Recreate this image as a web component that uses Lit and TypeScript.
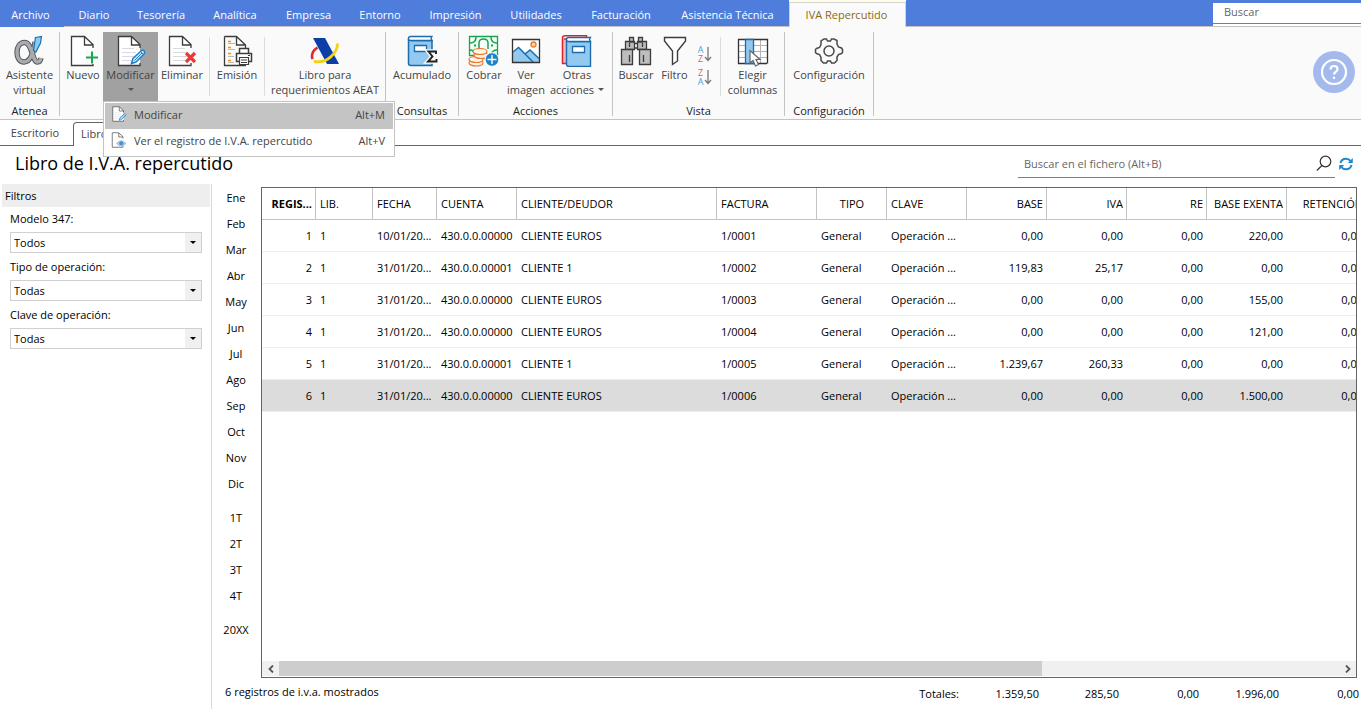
import { LitElement, html, svg, css, nothing, type TemplateResult } from "lit";
import { customElement, property, state } from "lit/decorators.js";
import { classMap } from "lit/directives/class-map.js";

const page = (lines: boolean) => svg`
  <path d="M2.500 1.500H15.500L24 10V30.500H2.500Z" fill="#fff" stroke="none"/>
  ${lines ? svg`<path d="M6 13.500H18M6 17.500H20M6 21.500H20M6 25.500H18" stroke="#d8dbe0"/>` : nothing}
  <path d="M24 13V9.500L15.500 1.500H2.500V30.500H24V28M15.500 2V10H24" fill="none" stroke="#3c3c3c" stroke-width="1.300"/>`;

const pencil = svg`
  <path d="M16.500 28.500L18 23.500L26.500 15.500Q28.500 14.500 29.500 16.500Q30 18 29 19L21 27Z" fill="#d5ebfa" stroke="#1e82c8" stroke-width="1.500"/>
  <path d="M19.500 25.500L27 18M25.500 16.500L28.500 19.500" stroke="#1e82c8" fill="none"/>`;

const ALPHA = "M21 7C19.500 17 17 27 10 27C5.500 27 3 22.500 3 17.500C3 11.500 6 7.500 10.500 7.500C18.500 7.500 18 27 23.500 27C25.500 27 26.500 25.500 27 23";

const icons: Record<string, TemplateResult> = {
  alpha: svg`
    <path d=${ALPHA} fill="none" stroke="#55585c" stroke-width="5.400"/>
    <path d=${ALPHA} fill="none" stroke="#a9abad" stroke-width="3.400"/>
    <path d="M21.500 2.500L27.500 1.500L26.500 8L22 17L19.500 15.500Z" fill="#8dcaf2" stroke="#1a70b4" stroke-width="1.200"/>`,
  add: svg`<g transform="translate(2 0)">${page(false)}<path d="M16 16H30V29H16Z" fill="#fafafa"/><path d="M23 16.500V28.500M17 22.500H29" stroke="#14a94b" stroke-width="2"/></g>`,
  edit: svg`<g transform="translate(1 0)">${page(true)}</g>${pencil}`,
  remove: svg`<g transform="translate(1 0)">${page(true)}</g><path d="M20 18L29 27M29 18L20 27" stroke="#ee3a36" stroke-width="3.200"/>`,
  emit: svg`
    <path d="M3.500 1.500H15.500L24.500 10V13M3.500 1.500V30.500H25M15.500 2V10H24" fill="none" stroke="#3c3c3c" stroke-width="1.300"/>
    <path d="M7 6.500H10M7 12.500H10M7 18.500H10M7 25.500H10" stroke="#f39200" stroke-width="1.300"/>
    <path d="M7 8.500H14M7 14.500H14M7 21.500H13M7 27.500H13" stroke="#b9b9b9"/>
    <path d="M18.500 18V13.500H27.500V18M18.500 26.500H15.500V18.500H30.500V26.500H27.500" fill="#fff" stroke="#3c3c3c" stroke-width="1.500"/>
    <path d="M18.500 22.500H27.500V29.500H18.500ZM20 25H26M20 27.500H26M27 20.500H29" fill="#fff" stroke="#3c3c3c" stroke-width="1.200"/>`,
  aeat: svg`
    <path d="M4 3H16L30 29H18Z" fill="#0c3ea8"/>
    <path d="M8.500 12.500C4 15.500 2 19.500 3.500 24" fill="none" stroke="#e3262e" stroke-width="2.600"/>
    <path d="M28.500 8.500C28.500 17 19 29 5 26.500" fill="none" stroke="#f7d010" stroke-width="2.800"/>`,
  sum: svg`
    <path d="M2.500 3V28.500Q2.500 30.500 5 30.500H26V5.500H5" fill="#93c9ee" stroke="#1a6cae" stroke-width="1.500"/>
    <path d="M26 1.500H4.500Q2.500 1.500 2.500 3.500T4.500 5.500H26L25 3.500Z" fill="#fff" stroke="#1a6cae" stroke-width="1.300"/>
    <path d="M8.500 10.500H20.500V16.500H8.500Z" fill="#fff" stroke="#1a6cae" stroke-width="1.300"/>
    <path d="M30 19V16.500H22.500L26.500 21.500L22 26.500H30.500V24" fill="none" stroke="#fafafa" stroke-width="4.500"/>
    <path d="M30 19V16.500H22.500L26.500 21.500L22 26.500H30.500V24" fill="none" stroke="#222" stroke-width="1.900"/>`,
  cash: svg`
    <path d="M1.500 1.500H29.500V20.500H1.500Z" fill="#f4fff7" stroke="#18a350" stroke-width="1.300"/>
    <path d="M2 8Q8 8 8 2M23 2Q23 8 29 8M2 15Q6 15 8 20M29 15Q24 15 23 20M11 14V8Q11 4 15.500 4T20 8V14" fill="none" stroke="#18a350" stroke-width="1.500"/>
    <path d="M6 10.500H8M23 10.500H25" stroke="#18a350" stroke-width="2"/>
    <g fill="#fff2e6" stroke="#e9762b" stroke-width="1.200"><ellipse cx="8" cy="28" rx="7" ry="3"/><ellipse cx="8" cy="24.500" rx="7" ry="3"/><ellipse cx="13" cy="20.500" rx="7" ry="3"/><ellipse cx="12" cy="16.500" rx="7" ry="3"/></g>
    <circle cx="24" cy="24.500" r="6.800" fill="#1e82c8" stroke="#fafafa"/>
    <path d="M24 20V29M19.500 24.500H28.500" stroke="#fff" stroke-width="1.400"/>`,
  image: svg`
    <path d="M2.500 4.500H29.500V27.500H2.500Z" fill="#fff"/>
    <path d="M3 17L9 12L15 18L20 15L29 23V27H3Z" fill="#93c9ee"/>
    <path d="M3 17L8.500 12.500L23 27M15 19L20 15L29 23.500" fill="none" stroke="#1a6cae" stroke-width="1.400"/>
    <path d="M2.500 4.500H29.500V27.500H2.500Z" fill="none" stroke="#333" stroke-width="1.300"/>
    <circle cx="23.500" cy="9.500" r="2.500" fill="#ffd79a" stroke="#ea7b2d" stroke-width="1.300"/>`,
  books: svg`
    <path d="M1.500 3V28.500H23V4H3Z" fill="#f6b8bb"/>
    <path d="M25.500 4V.800H4Q1.500 .800 1.500 3V28.500H7M3 4H10" fill="none" stroke="#d8242c" stroke-width="1.500"/>
    <path d="M5.500 5V29.500Q5.500 31.500 8 31.500H29.500V6.500H8" fill="#93c9ee" stroke="#1a6cae" stroke-width="1.400"/>
    <path d="M29.500 2.500H7.500Q5.500 2.500 5.500 4.500T7.500 6.500H29.500L28.500 4.500Z" fill="#fff" stroke="#1a6cae" stroke-width="1.300"/>
    <path d="M11.500 11.500H23.500V17.500H11.500Z" fill="#fff" stroke="#1a6cae" stroke-width="1.300"/>`,
  binoculars: svg`
    <g fill="#bdbdbd" stroke="#3c3c3c" stroke-width="1.300">
      <path d="M14 8.500H18V13H14Z" fill="#fff"/>
      <path d="M9.500 2.500H13.500V7H9.500ZM18.500 2.500H22.500V7H18.500ZM5.500 6.500H14.500V14.500H5.500ZM17.500 6.500H26.500V14.500H17.500Z"/>
      <path d="M1.500 14.500H12.500V29.500H1.500ZM19.500 14.500H30.500V29.500H19.500Z"/>
      <path d="M9.500 20V27M23.500 20V27M9.500 8V12M22.500 8V12"/>
    </g>`,
  funnel: svg`<path d="M5.500 2.500H26.500V6L18.500 16V26L13.500 29.500V16L5.500 6Z" fill="#fff" stroke="#3c3c3c" stroke-width="1.400"/>`,
  columns: svg`
    <path d="M1.500 4.500H30.500V28.500H1.500Z" fill="#fff"/>
    <path d="M2 10.500H30M2 16.500H30M2 22.500H30M23.500 5V28" stroke="#b4b4b4"/>
    <path d="M30 28.500H1.500V4.500H30.500V28.500" fill="none" stroke="#333" stroke-width="1.300"/>
    <path d="M8.500 4.500H16.500V28.500H8.500Z" fill="#93c9ee" stroke="#1a6cae" stroke-width="1.300"/>
    <path d="M13 15.500V28L16 25.500L18.500 31L21.500 29.500L19 24.500H23Z" fill="#fff" stroke="#666" stroke-width="1.200"/>`,
  gear: svg`
    <path d="M11 4H13.500L14.500 6H17.500L18.500 4H21L24 5.500V9L25.500 12L28.500 13L29.500 14.500V17.500L28.500 18.500L25.500 19.500L24 22V25.500L21.500 28H18.500L17.500 26H14.500L13.500 28H10.500L8 25.500V22.500L6.500 19.500L3.500 18.500L2.500 17.500V14.500L3.500 13.500L6.500 12.500L8 9.500V6Z" fill="#fafafa" stroke="#4a4a4a" stroke-width="1.500"/>
    <circle cx="16" cy="16" r="5" fill="none" stroke="#4a4a4a" stroke-width="1.500"/>`,
  view: svg`${page(false)}
    <path d="M11 23Q20 12 30 23Q20 33 11 23Z" fill="#b5cde0" stroke="#7c9cb8"/><circle cx="20.500" cy="22.500" r="4" fill="#3f93d0"/>`,
};

const icon = (name: string, small = false) =>
  html`<svg class=${small ? "icon-sm" : "icon"} viewBox="0 0 32 32" aria-hidden="true">${icons[name]}</svg>`;

const sharedText = css`
  :host { font-family: "Open Sans", "Noto Sans", sans-serif; }
  * { box-sizing: border-box; }
  button, input, select { font: inherit; color: inherit; border: 0; padding: 0; margin: 0; background: none; border-radius: 0; }
`;

interface Tool { id: string; icon: string; lines: string[]; arrow?: boolean }

@customElement("ribbon-tool")
class RibbonTool extends LitElement {
  @property({ attribute: false }) tool!: Tool;
  @property({ type: Boolean }) open = false;

  static styles = [sharedText, css`
    :host { display: block; }
    button { display: flex; flex-direction: column; align-items: center; width: 100%; height: 69px; padding-top: 3px; white-space: nowrap; font-size: 11px; line-height: 15px; color: #444; }
    button.pressed { background: #a1a1a1; }
    .icon { width: 32px; height: 32px; flex: none; }
    .line { display: flex; align-items: center; justify-content: center; height: 15px; gap: 4px; }
    .caret { width: 0; border: 3px solid transparent; border-top-color: #555; border-bottom-width: 0; }
  `];

  render() {
    const { tool } = this;
    return html`<button class=${classMap({ pressed: this.open })} aria-label=${tool.lines.join(" ")}>
      ${icon(tool.icon)}
      ${tool.lines.map((text, i) => html`<span class="line">${text}${tool.arrow && i === tool.lines.length - 1 ? html`<span class="caret"></span>` : nothing}</span>`)}
    </button>`;
  }
}

const MENU = [
  { icon: "edit", text: "Modificar", key: "Alt+M" },
  { icon: "view", text: "Ver el registro de I.V.A. repercutido", key: "Alt+V" },
];

const MODULES = ["Archivo", "Diario", "Tesorería", "Analítica", "Empresa", "Entorno", "Impresión", "Utilidades", "Facturación", "Asistencia Técnica", "IVA Repercutido"];

@customElement("app-ribbon")
class AppRibbon extends LitElement {
  @state() private highlighted = 0;

  static styles = [sharedText, css`
    :host { display: block; font-size: 11px; }
    .modules { display: grid; grid-template-columns: 64px 60px 74px 74px 73px 70px 81px 80px 90px 123px 117px 1fr 148px; height: 27px; background: #4e7ddc; }
    .module { border-bottom: 1px solid #c3c3c3; color: #fff; padding-top: 2px; text-align: center; white-space: nowrap; }
    .module:first-child { border-bottom: 0; padding-right: 3px; }
    .module.active { border: solid #d4d4d4; border-width: 1px 1px 0; margin-top: 2px; padding: 0 2px 2px 0; background: #fafafa; color: #8a6914; box-shadow: 0 -2px #fffde6; }
    .filler { border-bottom: 1px solid #c3c3c3; }
    .search { margin-top: 3px; background: #fff; border-bottom: 1px solid #c3c3c3; padding-bottom: 2px; display: flex; }
    .search input { flex: 1; min-width: 0; padding: 0 11px 3px; border-bottom: 1px solid #7d7d7d; outline: 0; }
    input::placeholder { color: #666; opacity: 1; }
    .bar { position: relative; display: flex; height: 93px; background: #fafafa; border-bottom: 1px solid #c3c3c3; padding-top: 5px; }
    .group { display: flex; flex-direction: column; }
    .tools { display: flex; height: 69px; }
    .tools.inset { padding-left: 3px; }
    .name { margin-top: 2px; text-align: center; line-height: 15px; color: #222; }
    .split { flex: none; width: 1px; margin: 0 0 3px; background: #c3c3c3; }
    .thin { width: 1px; margin: 5px 0 5px; background: #dcdcdc; }
    .gap { margin-left: 3px; }
    .w37 { width: 37px; } .w40 { width: 40px; } .w44 { width: 44px; } .w48 { width: 48px; } .w54 { width: 54px; } .w55 { width: 55px; }
    .w59 { width: 59px; } .w62 { width: 62px; } .w63 { width: 63px; } .w72 { width: 72px; } .w88 { width: 88px; } .w120 { width: 120px; }
    .actions { width: 153px; }
    .sort { display: flex; flex-direction: column; gap: 5px; width: 24px; padding-top: 13px; align-items: center; }
    .sort button { display: flex; align-items: center; gap: 1px; height: 18px; }
    .letters { display: flex; flex-direction: column; font-size: 9px; line-height: 9px; }
    .sort svg { width: 8px; height: 16px; }
    .blue { color: #4a9fd8; }
    .red { color: #e25b63; }
    .help { margin: 19px 6px 0 auto; width: 42px; height: 42px; border-radius: 50%; background: #a5baec; display: grid; place-items: center; align-self: start; }
    .menu { position: absolute; z-index: 2; left: 103px; top: 74px; width: 292px; margin: 0; padding: 1px; list-style: none; background: #fff; border: 1px solid #c3c3c3; }
    .menu button { display: flex; align-items: center; width: 100%; height: 26px; padding: 0 8px 4px 6px; font-size: 11px; color: #444; text-align: left; }
    .menu button.on { background: #c4c4c4; }
    .menu .text { flex: 1; margin-left: 7px; }
    .icon-sm { width: 16px; height: 16px; }
  `];

  private tool(size: string, id: string, glyph: string, lines: string[], arrow = false, open = false) {
    return html`<ribbon-tool class=${size} .tool=${{ id, icon: glyph, lines, arrow }} ?open=${open}></ribbon-tool>`;
  }

  private sort(descending: boolean) {
    const letters = [html`<span class="blue">A</span>`, html`<span class="red">Z</span>`];
    return html`<button aria-label=${descending ? "Orden descendente" : "Orden ascendente"}>
      <span class="letters">${descending ? letters.reverse() : letters}</span>
      <svg viewBox="0 0 8 16"><path d="M4 1V14M1 11L4 14.500L7 11" fill="none" stroke="#777" stroke-width="1.300"/></svg></button>`;
  }

  render() {
    return html`
      <nav class="modules">
        ${MODULES.map((m, i) => html`<button class=${classMap({ module: true, active: i === MODULES.length - 1 })}>${m}</button>`)}
        <span class="filler"></span>
        <div class="search"><input type="text" placeholder="Buscar" aria-label="Buscar"></div>
      </nav>
      <div class="bar">
        <div class="group w59"><div class="tools">${this.tool("w59", "atenea", "alpha", ["Asistente", "virtual"])}</div><div class="name">Atenea</div></div>
        <span class="split"></span>
        <div class="group"><div class="tools inset">
          ${this.tool("w40", "new", "add", ["Nuevo"])}
          ${this.tool("w55", "edit", "edit", ["Modificar", ""], true, true)}
          ${this.tool("w48", "del", "remove", ["Eliminar"])}
          <span class="thin gap"></span>
          ${this.tool("w54", "emit", "emit", ["Emisión"])}
          <span class="thin"></span>
          ${this.tool("w120", "aeat", "aeat", ["Libro para", "requerimientos AEAT"])}
        </div></div>
        <span class="split"></span>
        <div class="group"><div class="tools">${this.tool("w72", "sum", "sum", ["Acumulado"])}</div><div class="name">Consultas</div></div>
        <span class="split"></span>
        <div class="group actions"><div class="tools inset">
          ${this.tool("w44", "cash", "cash", ["Cobrar"])}
          ${this.tool("w40", "image", "image", ["Ver", "imagen"])}
          ${this.tool("w62", "more", "books", ["Otras", "acciones"], true)}
        </div><div class="name">Acciones</div></div>
        <span class="split"></span>
        <div class="group"><div class="tools inset">
          ${this.tool("w40", "find", "binoculars", ["Buscar"])}
          ${this.tool("w37", "filter", "funnel", ["Filtro"])}
          <div class="sort">${this.sort(false)}${this.sort(true)}</div>
          <span class="thin gap"></span>
          ${this.tool("w63", "columns", "columns", ["Elegir", "columnas"])}
        </div><div class="name">Vista</div></div>
        <span class="split"></span>
        <div class="group"><div class="tools">${this.tool("w88", "config", "gear", ["Configuración"])}</div><div class="name">Configuración</div></div>
        <span class="split"></span>
        <button class="help" aria-label="Ayuda"><svg width="28" height="28" viewBox="0 0 28 28" fill="none" stroke="#fff" stroke-width="2.200">
          <circle cx="14" cy="14" r="12"/><path d="M10.500 11.500Q10.500 8 14 8T17.500 11.200Q17.500 13 15.500 14Q14 14.800 14 16.500M14 18.800V21"/></svg></button>
        <ul class="menu">
          ${MENU.map((m, i) => html`<li><button class=${classMap({ on: i === this.highlighted })} @mouseenter=${() => (this.highlighted = i)}>
            ${icon(m.icon, true)}<span class="text">${m.text}</span><span>${m.key}</span></button></li>`)}
        </ul>
      </div>`;
  }
}

const COLUMNS = [
  { name: "REGIS...", kind: "num strong" }, { name: "LIB.", kind: "" }, { name: "FECHA", kind: "" }, { name: "CUENTA", kind: "" },
  { name: "CLIENTE/DEUDOR", kind: "" }, { name: "FACTURA", kind: "" }, { name: "TIPO", kind: "mid" }, { name: "CLAVE", kind: "" },
  { name: "BASE", kind: "num" }, { name: "IVA", kind: "num" }, { name: "RE", kind: "num" }, { name: "BASE EXENTA", kind: "num" }, { name: "RETENCIÓN", kind: "num" },
];

const row = (n: number, date: string, client: 0 | 1, base: string, iva: string, exempt: string) => [
  String(n), "1", date, client ? "430.0.0.00001" : "430.0.0.00000", client ? "CLIENTE 1" : "CLIENTE EUROS",
  `1/000${n}`, "General", "Operación ...", base, iva, "0,00", exempt, "0,00",
];

const ROWS = [
  row(1, "10/01/20...", 0, "0,00", "0,00", "220,00"),
  row(2, "31/01/20...", 1, "119,83", "25,17", "0,00"),
  row(3, "31/01/20...", 0, "0,00", "0,00", "155,00"),
  row(4, "31/01/20...", 0, "0,00", "0,00", "121,00"),
  row(5, "31/01/20...", 1, "1.239,67", "260,33", "0,00"),
  row(6, "31/01/20...", 0, "0,00", "0,00", "1.500,00"),
];

@customElement("vat-grid")
class VatGrid extends LitElement {
  @state() private selected = 5;

  static styles = [sharedText, css`
    :host { display: flex; flex-direction: column; min-width: 0; border: 1px solid #646464; background: #fff; font-size: 11px; overflow: hidden; }
    .view { flex: 1; overflow: hidden; min-height: 0; }
    table { table-layout: fixed; border-collapse: separate; border-spacing: 0; width: 1105px; color: #000; }
    th, td { height: 32px; padding: 0 4px; font-weight: 400; text-align: left; white-space: nowrap; overflow: hidden; }
    th { padding-right: 3px; border-right: 1px solid #c3c3c3; border-bottom: 1px solid #c3c3c3; }
    td { border-bottom: 1px solid #eee; }
    .num { text-align: right; }
    .strong { font-weight: 700; }
    .mid { text-align: center; }
    td.mid { text-align: left; }
    td.strong { font-weight: 400; }
    tr.sel td { background: #dcdcdc; }
    .c54 { width: 54px; } .c57 { width: 57px; } .c64 { width: 64px; } .c70 { width: 70px; } .c80 { width: 80px; } .c100 { width: 100px; } .c200 { width: 200px; }
    .scroll { display: grid; grid-template-columns: 17px 1fr 17px; height: 15px; margin-bottom: 1px; background: #f0f0f0; }
    .scroll button { display: grid; place-items: center; }
    .track { display: flex; }
    .thumb { width: 72%; background: #cdcdcd; }
  `];

  private arrow(d: string, label: string) {
    return html`<button aria-label=${label}><svg width="8" height="8" viewBox="0 0 8 8"><path d=${d} fill="none" stroke="#555" stroke-width="1.800"/></svg></button>`;
  }

  render() {
    return html`
      <div class="view"><table>
        <colgroup>${["c54", "c57", "c64", "c80", "c200", "c100", "c70", "c80", "c80", "c80", "c80", "c80", "c80"].map((c) => html`<col class=${c}>`)}</colgroup>
        <thead><tr>${COLUMNS.map((c) => html`<th class=${c.kind} scope="col">${c.name}</th>`)}</tr></thead>
        <tbody>${ROWS.map((r, i) => html`<tr class=${classMap({ sel: i === this.selected })} @click=${() => (this.selected = i)}>
          ${r.map((v, c) => html`<td class=${COLUMNS[c].kind}>${v}</td>`)}</tr>`)}</tbody>
      </table></div>
      <div class="scroll">${this.arrow("M6 .5L2.500 4L6 7.500", "Desplazar a la izquierda")}<div class="track"><div class="thumb"></div></div>${this.arrow("M2 .5L5.500 4L2 7.500", "Desplazar a la derecha")}</div>`;
  }
}

const FILTERS = [
  { id: "modelo", label: "Modelo 347:", value: "Todos" },
  { id: "tipo", label: "Tipo de operación:", value: "Todas" },
  { id: "clave", label: "Clave de operación:", value: "Todas" },
];
const PERIODS = [
  ["Ene", "Feb", "Mar", "Abr", "May", "Jun", "Jul", "Ago", "Sep", "Oct", "Nov", "Dic"],
  ["1T", "2T", "3T", "4T"],
  ["20XX"],
];
const TOTALS = ["1.359,50", "285,50", "0,00", "1.996,00", "0,00"];

@customElement("app-root")
class AppRoot extends LitElement {
  static styles = [sharedText, css`
    :host { display: flex; flex-direction: column; min-height: 100vh; background: #fff; font-size: 11px; color: #000; overflow: hidden; }
    .tabs { display: flex; height: 26px; }
    .tab { width: 73px; border-bottom: 1px solid #646464; color: #444; padding-right: 3px; }
    .tab.current { width: 162px; margin-top: 2px; padding: 0 0 2px 7px; text-align: left; white-space: nowrap; border: 1px solid #646464; border-bottom: 0; border-radius: 4px 4px 0 0; }
    .rest { flex: 1; border-bottom: 1px solid #646464; }
    .head { display: flex; align-items: flex-start; justify-content: space-between; height: 38px; padding: 3px 8px 0 15px; }
    h1 { margin: 0; font-size: 18px; line-height: 28px; font-weight: 400; white-space: nowrap; }
    .find { display: flex; align-items: center; }
    .field { display: flex; align-items: center; width: 317px; height: 29px; border-bottom: 1px solid #7d7d7d; padding: 0 3px 0 6px; }
    .field input { flex: 1; min-width: 0; outline: 0; }
    .field input::placeholder { color: #666; opacity: 1; }
    .find button { display: grid; }
    .refresh { margin-left: 4px; }
    .main { display: grid; grid-template-columns: 212px minmax(0, 1fr); flex: 1; }
    aside { padding-left: 2px; border-right: 1px solid #d8d8d8; }
    h2 { margin: 0 1px 0 0; padding-left: 3px; background: #eee; font-size: 11px; line-height: 23px; font-weight: 400; }
    .filter { display: flex; flex-direction: column; padding: 4px 9px 0 8px; }
    .filter label { line-height: 15px; margin-bottom: 6px; }
    .filter + .filter { padding-top: 6px; }
    .select { position: relative; display: flex; height: 21px; }
    .select select { appearance: none; width: 100%; border: 1px solid #d0d0d0; background: linear-gradient(#f0f0f0, #f0f0f0) right / 16px 100% no-repeat #fff; padding: 0 20px 0 3px; }
    .select::after { content: ""; position: absolute; right: 6px; top: 9px; border: 3px solid transparent; border-top-color: #000; border-bottom-width: 0; pointer-events: none; }
    .content { display: grid; grid-template-columns: 49px minmax(0, 1fr); grid-template-rows: 1fr auto; }
    .periods { display: flex; flex-direction: column; gap: 8px; }
    .span { display: flex; flex-direction: column; }
    .span button { height: 26px; padding-right: 1px; }
    vat-grid { margin: 3px 4px 0 0; }
    footer { display: flex; justify-content: space-between; height: 31px; grid-column: 1 / 3; padding: 5px 2px 0 13px; line-height: 18px; }
    dl { display: grid; grid-template-columns: auto repeat(5, 80px); margin: 0; padding-top: 2px; text-align: right; }
    dd { margin: 0; }
  `];

  render() {
    return html`
      <app-ribbon></app-ribbon>
      <div class="tabs"><button class="tab">Escritorio</button><button class="tab current">Libro de I.V.A. repercutido</button><span class="rest"></span></div>
      <header class="head">
        <h1>Libro de I.V.A. repercutido</h1>
        <div class="find">
          <div class="field"><input type="text" placeholder="Buscar en el fichero (Alt+B)" aria-label="Buscar en el fichero">
            <button aria-label="Buscar"><svg width="16" height="16" viewBox="0 0 16 16" fill="none" stroke="#333" stroke-width="1.200"><circle cx="9.500" cy="6.500" r="5.300"/><path d="M6 10.500L.800 15.500"/></svg></button></div>
          <button class="refresh" aria-label="Actualizar"><svg width="14" height="14" viewBox="0 0 14 14" fill="none" stroke="#2088cc" stroke-width="2"><path d="M1.500 6Q2.500 1.700 7 1.700Q10 1.700 11.500 4M12.500 8Q11.500 12.300 7 12.300Q4 12.300 2.500 10"/><path d="M13.800 1V6H8.800ZM.2 13V8H5.200Z" fill="#2088cc" stroke="none"/></svg></button>
        </div>
      </header>
      <div class="main">
        <aside>
          <h2>Filtros</h2>
          ${FILTERS.map((f) => html`<div class="filter"><label for=${f.id}>${f.label}</label><div class="select"><select id=${f.id}><option>${f.value}</option></select></div></div>`)}
        </aside>
        <div class="content">
          <nav class="periods">${PERIODS.map((g) => html`<div class="span">${g.map((p) => html`<button>${p}</button>`)}</div>`)}</nav>
          <vat-grid></vat-grid>
          <footer>
            <span>6 registros de i.v.a. mostrados</span>
            <dl><dt>Totales:</dt>${TOTALS.map((t) => html`<dd>${t}</dd>`)}</dl>
          </footer>
        </div>
      </div>`;
  }
}
